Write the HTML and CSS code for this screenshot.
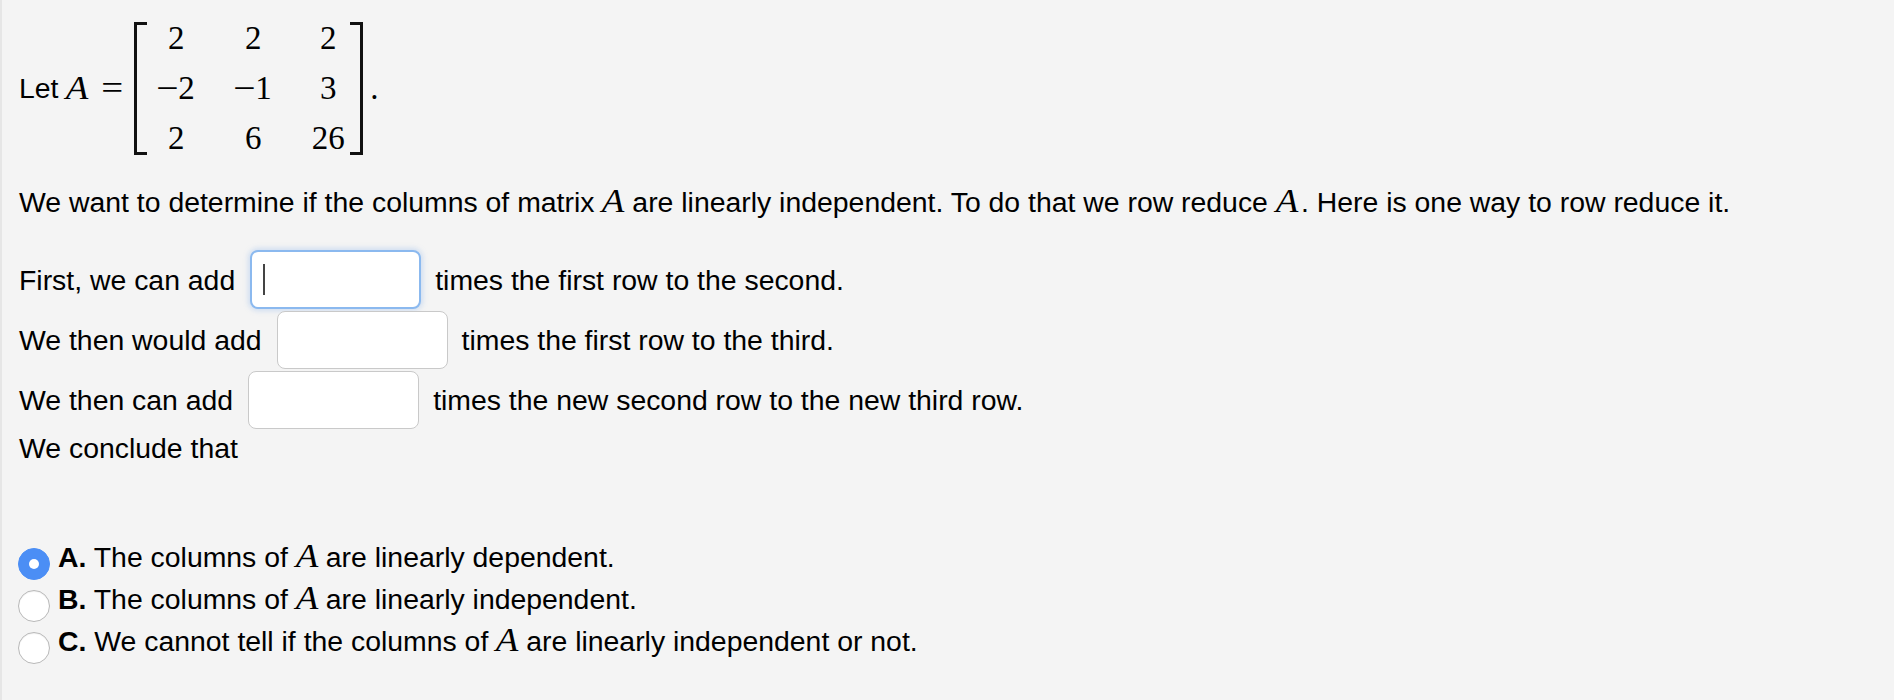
FILE: index.html
```html
<!DOCTYPE html>
<html lang="en">
<head>
<meta charset="utf-8">
<title>Row reduction</title>
<link rel="stylesheet" href="styles.css">
</head>
<body>
<main class="page">
  <div class="matrix-line">
    <span class="txt">Let</span>
    <span class="mi var-a">A</span>
    <span class="mo eq">=</span>
    <span class="matrix">
      <span class="bracket left"></span>
      <span class="cells">
        <span>2</span><span>2</span><span>2</span>
        <span><span class="minus">−</span>2</span><span><span class="minus">−</span>1</span><span>3</span>
        <span>2</span><span>6</span><span>26</span>
      </span>
      <span class="bracket right"></span>
    </span>
    <span class="mo dot">.</span>
  </div>

  <p class="intro">We want to determine if the columns of matrix <i class="mi">A</i> are linearly independent. To do that we row reduce <i class="mi">A</i><span class="mdot">.</span> Here is one way to row reduce it.</p>

  <div class="step">
    <span>First, we can add</span>
    <span class="field focused"><input type="text" aria-label="first multiplier"><span class="caret"></span></span>
    <span>times the first row to the second.</span>
  </div>
  <div class="step">
    <span>We then would add</span>
    <span class="field"><input type="text" aria-label="second multiplier"></span>
    <span>times the first row to the third.</span>
  </div>
  <div class="step">
    <span>We then can add</span>
    <span class="field"><input type="text" aria-label="third multiplier"></span>
    <span>times the new second row to the new third row.</span>
  </div>
  <p class="conclude">We conclude that</p>

  <ul class="choices">
    <li class="choice"><span class="radio checked"></span><span class="label"><b>A.</b> The columns of <i class="mi">A</i> are linearly dependent.</span></li>
    <li class="choice"><span class="radio"></span><span class="label"><b>B.</b> The columns of <i class="mi">A</i> are linearly independent.</span></li>
    <li class="choice"><span class="radio"></span><span class="label"><b>C.</b> We cannot tell if the columns of <i class="mi">A</i> are linearly independent or not.</span></li>
  </ul>
</main>
</body>
</html>
```

FILE: styles.css
```css
html, body {
  margin: 0;
  padding: 0;
  background: #f4f4f4;
}

body {
  font-family: "Liberation Sans", Arial, Helvetica, sans-serif;
  font-size: 28.4px;
  line-height: 32px;
  color: #000;
}

.page {
  min-height: 700px;
  box-sizing: border-box;
  border-left: 2px solid #e6e6e6;
  padding: 13px 0 0 17px;
}

.mi, .mo, .cells {
  font-family: "Liberation Serif", "Times New Roman", Times, serif;
  font-size: 33px;
}

.mi {
  display: inline-block;
  font-style: italic;
  transform: scaleX(1.12);
  margin: 0 1px;
}

/* ---- matrix line ---- */
.matrix-line {
  display: flex;
  align-items: center;
  height: 150px;
}

.var-a {
  margin-left: 9px;
}

.eq {
  display: inline-block;
  margin-left: 14px;
  transform: scaleX(1.18);
}

.matrix {
  display: flex;
  align-items: center;
  margin-left: 13px;
  height: 150px;
}

.bracket {
  width: 10px;
  height: 127px;
  border: 3px solid #111;
}

.bracket.left {
  border-right: none;
}

.bracket.right {
  border-left: none;
}

.cells {
  display: grid;
  grid-template-columns: 48px 106px 44px;
  grid-auto-rows: 50px;
  padding-left: 5px;
  line-height: 50px;
  justify-items: center;
  align-items: center;
  white-space: nowrap;
}

.minus {
  display: inline-block;
  transform: scaleX(1.2);
  margin-right: 2px;
}

.dot {
  margin-left: 7px;
}

/* ---- text ---- */
.intro {
  margin: 22px 0 0;
  white-space: nowrap;
}

.mdot {
  margin-left: 3px;
}

.step {
  display: flex;
  align-items: center;
  height: 59px;
  margin-bottom: 1px;
}

.intro + .step {
  margin-top: 32px;
}

.field {
  position: relative;
  display: block;
  margin: 0 14px 0 15px;
}

.field input {
  display: block;
  box-sizing: border-box;
  width: 171px;
  height: 58px;
  margin: 0;
  padding: 0 12px;
  border: 1px solid #c9c9c9;
  border-radius: 8px;
  background: #fff;
  font: inherit;
  outline: none;
}

.field.focused input {
  height: 59px;
  border: 2px solid #8bb9ef;
  box-shadow: 0 0 5px 2px rgba(140, 180, 235, 0.35);
}

.caret {
  position: absolute;
  left: 13px;
  top: 14px;
  width: 2px;
  height: 31px;
  background: #444;
}

.conclude {
  margin: 3px 0 0;
}

/* ---- choices ---- */
.choices {
  list-style: none;
  margin: 76px 0 0;
  padding: 0;
}

.choice {
  display: flex;
  align-items: flex-start;
  height: 42px;
}

.radio {
  box-sizing: border-box;
  flex: none;
  width: 32px;
  height: 32px;
  margin: 8px 8px 0 -1px;
  border-radius: 50%;
  background: #fff;
  border: 1px solid #b8b8b8;
  box-shadow: inset 0 1px 1px rgba(0, 0, 0, 0.06);
  display: flex;
  align-items: center;
  justify-content: center;
}

.radio.checked {
  background: #4b8ef5;
  border-color: #4b8ef5;
  box-shadow: none;
}

.radio.checked::after {
  content: "";
  width: 10px;
  height: 10px;
  border-radius: 50%;
  background: #fff;
}

.label b {
  font-weight: bold;
}
```
